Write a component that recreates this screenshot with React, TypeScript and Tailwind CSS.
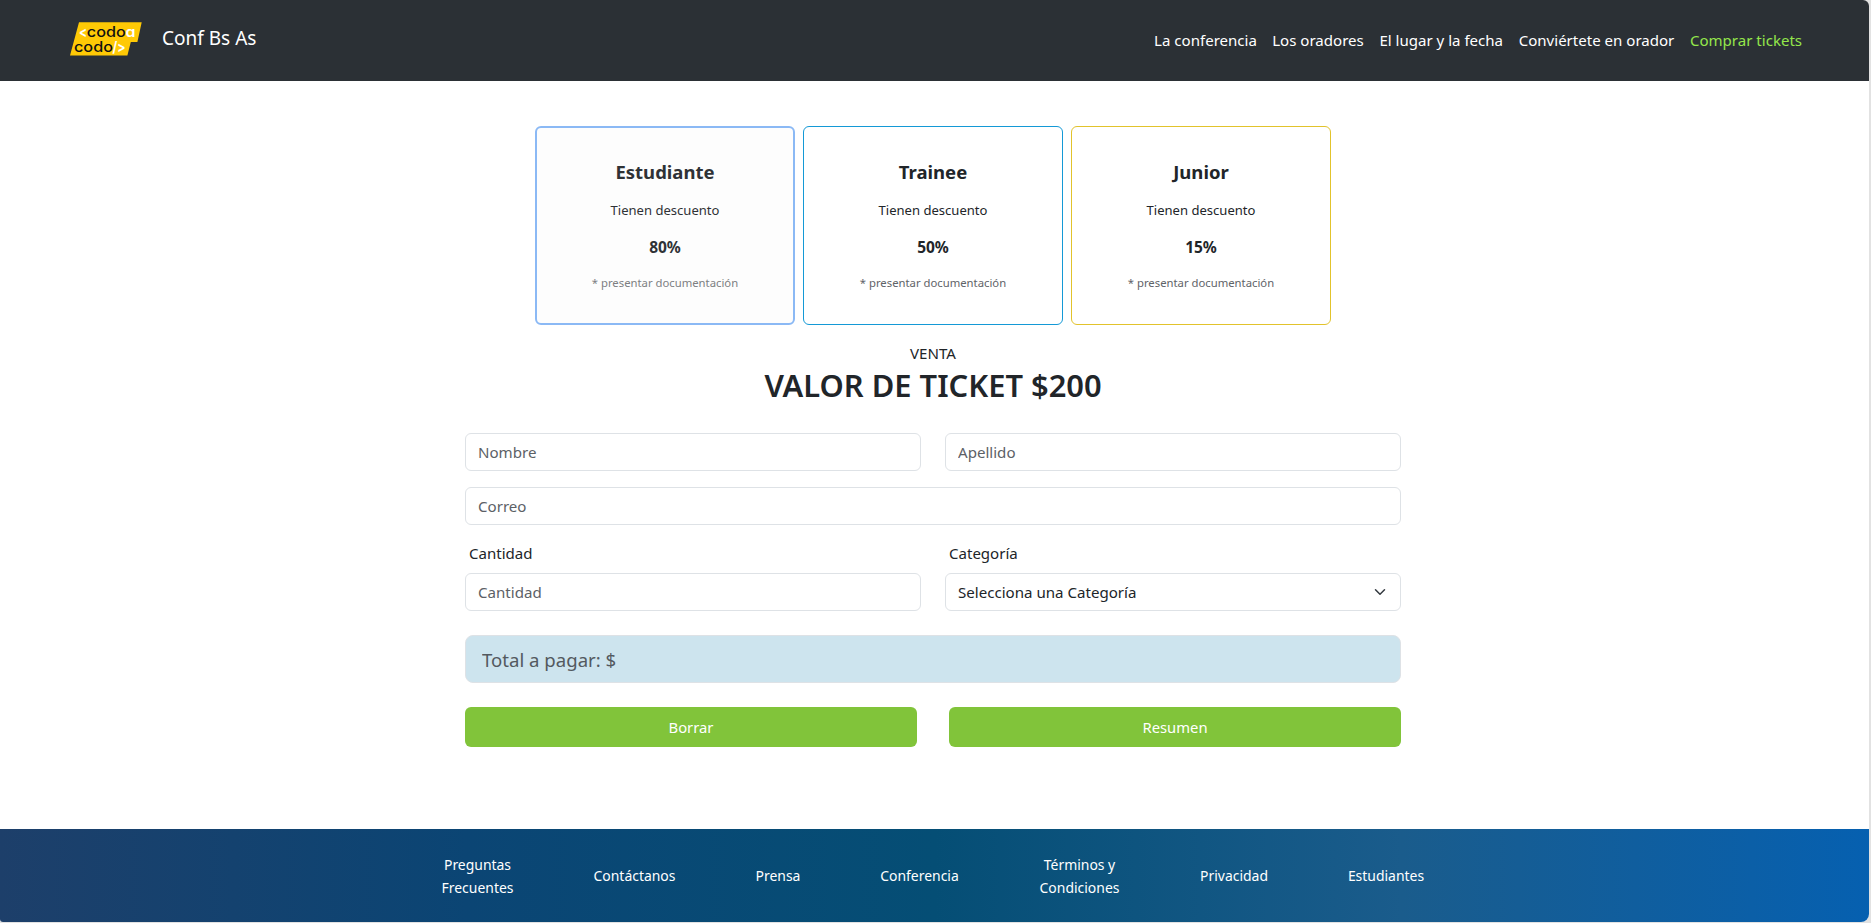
const NAV = [
  { label: 'La conferencia', cls: 'w-[102px] text-white' },
  { label: 'Los oradores', cls: 'w-[91px] text-white' },
  { label: 'El lugar y la fecha', cls: 'w-[123.5px] text-white' },
  { label: 'Conviértete en orador', cls: 'w-[155px] text-white' },
  { label: 'Comprar tickets', cls: 'w-[112px] text-[#94e74b]' },
];

const CARDS = [
  { title: 'Estudiante', percent: '80%', cls: 'border-2 border-[#8bb9f5] bg-[#fdfdfd] pt-[30px]', tone: 'text-[#2f3236]', note: 'text-[#7d7f82]' },
  { title: 'Trainee', percent: '50%', cls: 'border border-[#1499d6] bg-white pt-[31px]', tone: 'text-[#212529]', note: 'text-[#5f6368]' },
  { title: 'Junior', percent: '15%', cls: 'border border-[#e2c32c] bg-white pt-[31px]', tone: 'text-[#212529]', note: 'text-[#5f6368]' },
];

const FOOTER = [
  { label: 'Preguntas Frecuentes', cls: 'w-[71px]' },
  { label: 'Contáctanos', cls: 'w-[83px]' },
  { label: 'Prensa', cls: 'w-[44px]' },
  { label: 'Conferencia', cls: 'w-[79px]' },
  { label: 'Términos y Condiciones', cls: 'w-[81px]' },
  { label: 'Privacidad', cls: 'w-[68px]' },
  { label: 'Estudiantes', cls: 'w-[76px]' },
];

function Logo() {
  return (
    <svg width="72" height="34" viewBox="0 0 72 34" className="block font-['Inter',sans-serif] text-[14.6px] font-medium [font-feature-settings:'cv11','calt'_0]">
      <polygon points="9,0.3 71.7,0.3 67.4,20 60.8,20 57.4,33.4 0,33.4" fill="#ffc905" />
      <text x="9" y="14.8" textLength="8" lengthAdjust="spacingAndGlyphs" fill="#fff" className="font-bold">&lt;</text>
      <text x="16.8" y="14.8" textLength="39" lengthAdjust="spacingAndGlyphs" fill="#111">codo</text>
      <text x="55.6" y="14.8" textLength="10" lengthAdjust="spacingAndGlyphs" fill="#fff" className="font-semibold">a</text>
      <text x="4" y="29.8" textLength="39" lengthAdjust="spacingAndGlyphs" fill="#111">codo</text>
      <text x="42.6" y="29.8" textLength="13" lengthAdjust="spacingAndGlyphs" fill="#fff" className="font-bold">/&gt;</text>
    </svg>
  );
}

const FIELD =
  'h-[38px] w-full rounded-md border border-[#dee2e6] bg-white px-3 text-[15.1px] leading-6 text-[#212529] placeholder:text-[#5c6166] placeholder:opacity-100 outline-none';
const BUTTON = 'h-10 w-[452px] rounded-md bg-[#81c43a] text-[14.8px] leading-6 text-white';

export default function App() {
  return (
    <div className="h-[923px] w-full overflow-hidden bg-[#e2e2e2] pr-[2px] pb-px font-['Noto_Sans',sans-serif] text-[#212529]">
      <div className="flex h-[922px] flex-col overflow-hidden rounded-tr-md rounded-br-lg rounded-bl-[3px] bg-white">
        <header className="flex h-[81px] shrink-0 items-center justify-between bg-[#2b3035] pr-[67px] pl-[70px]">
          <a className="flex items-center gap-[20px] pb-1">
            <Logo />
            <span className="pb-[2px] text-[19.03px] leading-[30px] text-white">Conf Bs As</span>
          </a>
          <nav className="flex gap-4 pb-[2px] text-[15.05px] leading-6 whitespace-nowrap">
            {NAV.map((n) => (
              <a key={n.label} className={`flex justify-center ${n.cls}`}>{n.label}</a>
            ))}
          </nav>
        </header>

        <main className="flex flex-1 flex-col items-center pt-[45px] pr-[3px]">
          <section className="flex gap-2">
            {CARDS.map((c) => (
              <article key={c.title} className={`flex h-[199px] w-[260px] flex-col items-center rounded-md ${c.cls} ${c.tone}`}>
                <h2 className="mb-3 text-[18.5px] leading-7 font-bold">{c.title}</h2>
                <p className="mb-[13px] text-[13.05px] leading-6">Tienen descuento</p>
                <p className="mb-3 text-[15.5px] leading-6 font-bold">{c.percent}</p>
                <p className={`text-[11.3px] leading-6 ${c.note}`}>* presentar documentación</p>
              </article>
            ))}
          </section>

          <p className="mt-4 text-[15.1px] leading-6">VENTA</p>
          <h1 className="mt-px text-[30.86px] leading-[38px] font-semibold whitespace-nowrap">VALOR DE TICKET $200</h1>

          <form className="mt-[29px] w-[936px]">
            <div className="flex gap-6">
              <input className={FIELD} placeholder="Nombre" />
              <input className={FIELD} placeholder="Apellido" />
            </div>
            <input className={`mt-4 block ${FIELD}`} placeholder="Correo" />
            <div className="mt-4 grid grid-cols-2 gap-6">
              <div>
                <label className="mb-2 block pl-1 text-[15.05px] leading-6">Cantidad</label>
                <input className={`block ${FIELD}`} placeholder="Cantidad" />
              </div>
              <div>
                <label className="mb-2 block pl-1 text-[15.05px] leading-6">Categoría</label>
                <div className={`flex items-center justify-between ${FIELD}`}>
                  <span>Selecciona una Categoría</span>
                  <svg width="16" height="12" viewBox="0 0 16 16" fill="none" stroke="#343a40" strokeWidth="2" strokeLinecap="round" strokeLinejoin="round">
                    <path d="m2 5 6 6 6-6" />
                  </svg>
                </div>
              </div>
            </div>
            <input
              className="mt-6 block h-12 w-full rounded-lg border border-[#dee2e6] bg-[#cde4ee] px-4 pt-px text-[18.6px] leading-[30px] outline-none placeholder:text-[#53595f] placeholder:opacity-100"
              placeholder="Total a pagar: $"
            />
            <div className="mt-6 flex justify-between">
              <button type="button" className={BUTTON}>Borrar</button>
              <button type="button" className={BUTTON}>Resumen</button>
            </div>
          </form>
        </main>

        <footer className="flex h-[93px] shrink-0 items-center justify-center gap-20 bg-[linear-gradient(90deg,#1d3f6a_0%,#0b4574_25%,#054e75_50%,#1a5c8c_75%,#0660b0_100%)] pr-[3px] text-center text-[13.95px] leading-[23px] text-white">
          {FOOTER.map((f) => (
            <a key={f.label} className={`flex justify-center ${f.cls}`}>{f.label}</a>
          ))}
        </footer>
      </div>
    </div>
  );
}
